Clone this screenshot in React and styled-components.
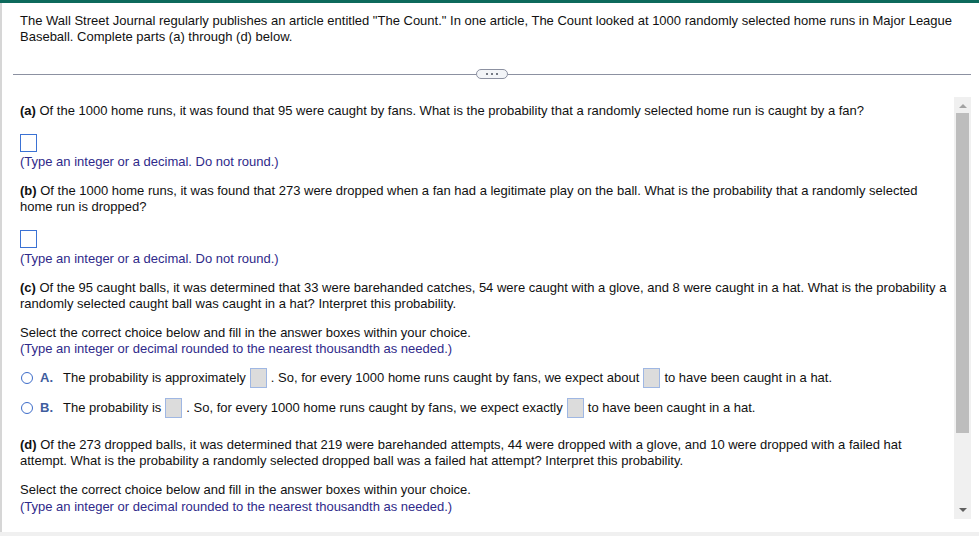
import React from "react";
import styled, { createGlobalStyle } from "styled-components";

const GlobalStyle = createGlobalStyle`
  html, body {
    margin: 0;
    padding: 0;
    background: #fff;
  }
  body {
    font-family: "Liberation Sans", Arial, sans-serif;
    font-size: 13px;
    line-height: 16px;
    color: #111;
  }
`;

const Page = styled.div`
  width: 979px;
  height: 536px;
  display: flex;
  flex-direction: column;
  overflow: hidden;
`;

const TopBar = styled.div`
  height: 3px;
  background: #0d6a5c;
  flex-shrink: 0;
`;

const Frame = styled.div`
  flex: 1;
  display: flex;
  flex-direction: column;
  border-left: 2px solid #d6d6d6;
  min-height: 0;
`;

const Intro = styled.p`
  margin: 0;
  padding: 10px 20px 0 18px;
`;

const DividerRow = styled.div`
  margin: 24px 8px 0 11px;
  height: 10px;
  display: flex;
  align-items: center;
`;

const Line = styled.div`
  flex: 1;
  height: 1px;
  background: #8c91a1;
`;

const Pill = styled.div`
  width: 30px;
  height: 8px;
  border: 1px solid #8c91a1;
  border-radius: 6px;
  background: #f3f5f8;
  display: flex;
  align-items: center;
  justify-content: center;
  gap: 3px;

  span {
    width: 2px;
    height: 2px;
    background: #4a4f5c;
    border-radius: 1px;
  }
`;

const Body = styled.div`
  margin-top: 18px;
  height: 422px;
  display: flex;
  margin-right: 8px;
`;

const Content = styled.div`
  flex: 1;
  padding: 6px 4px 0 18px;
  overflow: hidden;
`;

const Para = styled.p`
  margin: ${(p) => p.top || 0}px 0 0 0;
`;

const Hint = styled.p`
  margin: ${(p) => p.top || 0}px 0 0 0;
  color: #2f2a8a;
`;

const Label = styled.b`
  font-weight: bold;
`;

const AnswerBox = styled.div`
  margin-top: ${(p) => p.top || 15}px;
  width: 15px;
  height: 16px;
  border: 1px solid #3b72d4;
  background: #fff;
`;

const Options = styled.div`
  margin-top: 11px;
  display: flex;
  flex-direction: column;
  gap: 10px;
`;

const Option = styled.div`
  height: 20px;
  display: flex;
  align-items: center;
  white-space: nowrap;
`;

const Radio = styled.span`
  width: 10px;
  height: 10px;
  border: 1.5px solid #3d6cc9;
  border-radius: 50%;
  margin-left: 1px;
  flex-shrink: 0;
`;

const Letter = styled.span`
  width: 23px;
  margin-left: 7px;
  font-weight: bold;
  color: #3f5d9e;
`;

const Blank = styled.span`
  display: inline-block;
  width: 15px;
  height: 18px;
  border: 1px solid #9fb7e3;
  background: #dcdcdc;
  margin: 0 4px;
`;

const Scrollbar = styled.div`
  width: 17px;
  background: #f0f0f0;
  display: flex;
  flex-direction: column;
  align-items: center;
`;

const Arrow = styled.div`
  width: 0;
  height: 0;
  border-left: 4px solid transparent;
  border-right: 4px solid transparent;
  ${(p) =>
    p.down
      ? "border-top: 4px solid #606060; margin-top: auto; margin-bottom: 7px;"
      : "border-bottom: 4px solid #a3a3a3; margin-top: 7px;"}
`;

const Thumb = styled.div`
  width: 13px;
  height: 320px;
  margin-top: 5px;
  background: #bdbdbd;
`;

const BottomBand = styled.div`
  height: 4px;
  background: #f0f0f0;
  flex-shrink: 0;
`;

export default function App() {
  return (
    <>
      <GlobalStyle />
      <Page>
        <TopBar />
        <Frame>
          <Intro>
            The Wall Street Journal regularly publishes an article entitled "The
            Count." In one article, The Count looked at 1000 randomly selected
            home runs in Major League Baseball. Complete parts (a) through (d)
            below.
          </Intro>
          <DividerRow>
            <Line />
            <Pill>
              <span />
              <span />
              <span />
            </Pill>
            <Line />
          </DividerRow>
          <Body>
            <Content>
              <Para>
                <Label>(a)</Label> Of the 1000 home runs, it was found that 95
                were caught by fans. What is the probability that a randomly
                selected home run is caught by a fan?
              </Para>
              <AnswerBox top={15} />
              <Hint top={2}>(Type an integer or a decimal. Do not round.)</Hint>

              <Para top={13}>
                <Label>(b)</Label> Of the 1000 home runs, it was found that 273
                were dropped when a fan had a legitimate play on the ball. What
                is the probability that a randomly selected home run is dropped?
              </Para>
              <AnswerBox top={15} />
              <Hint top={3}>(Type an integer or a decimal. Do not round.)</Hint>

              <Para top={13}>
                <Label>(c)</Label> Of the 95 caught balls, it was determined that
                33 were barehanded catches, 54 were caught with a glove, and 8
                were caught in a hat. What is the probability a randomly selected
                caught ball was caught in a hat? Interpret this probability.
              </Para>
              <Para top={13}>
                Select the correct choice below and fill in the answer boxes
                within your choice.
              </Para>
              <Hint>
                (Type an integer or decimal rounded to the nearest thousandth as
                needed.)
              </Hint>
              <Options>
                <Option>
                  <Radio />
                  <Letter>A.</Letter>
                  The probability is approximately
                  <Blank />. So, for every 1000 home runs caught by fans, we
                  expect about
                  <Blank />
                  to have been caught in a hat.
                </Option>
                <Option>
                  <Radio />
                  <Letter>B.</Letter>
                  The probability is
                  <Blank />. So, for every 1000 home runs caught by fans, we
                  expect exactly
                  <Blank />
                  to have been caught in a hat.
                </Option>
              </Options>

              <Para top={19}>
                <Label>(d)</Label> Of the 273 dropped balls, it was determined
                that 219 were barehanded attempts, 44 were dropped with a glove,
                and 10 were dropped with a failed hat attempt. What is the
                probability a randomly selected dropped ball was a failed hat
                attempt? Interpret this probability.
              </Para>
              <Para top={13}>
                Select the correct choice below and fill in the answer boxes
                within your choice.
              </Para>
              <Hint top={1}>
                (Type an integer or decimal rounded to the nearest thousandth as
                needed.)
              </Hint>
            </Content>
            <Scrollbar>
              <Arrow />
              <Thumb />
              <Arrow down />
            </Scrollbar>
          </Body>
        </Frame>
        <BottomBand />
      </Page>
    </>
  );
}
